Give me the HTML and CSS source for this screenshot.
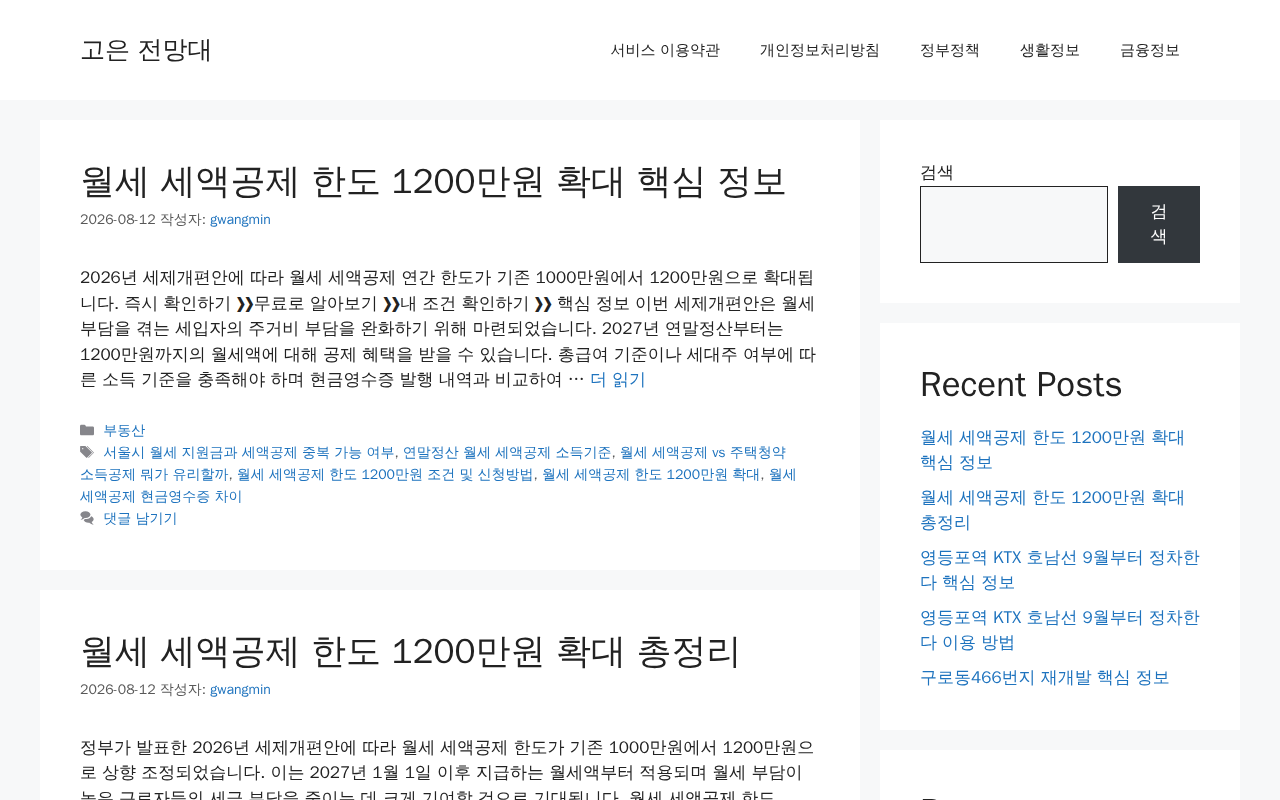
FILE: index.html
```html
<!DOCTYPE html>
<html lang="ko">
<head>
	<meta charset="utf-8">
	<meta name="viewport" content="width=device-width, initial-scale=1">
	<title>고은 전망대</title>
	<link rel="stylesheet" href="styles.css">
</head>
<body>
	<header class="site-header">
		<div class="inside-header">
			<p class="site-title"><a href="#">고은 전망대</a></p>
			<nav class="main-nav">
				<ul>
					<li><a href="#">서비스 이용약관</a></li>
					<li><a href="#">개인정보처리방침</a></li>
					<li><a href="#">정부정책</a></li>
					<li><a href="#">생활정보</a></li>
					<li><a href="#">금융정보</a></li>
				</ul>
			</nav>
		</div>
	</header>

	<div class="site-content">
		<main class="content-area">
			<article class="post">
				<h2 class="entry-title"><a href="#">월세 세액공제 한도 1200만원 확대 핵심 정보</a></h2>
				<div class="entry-meta"><time datetime="2026-08-12">2026-08-12</time> 작성자: <a href="#">gwangmin</a></div>
				<div class="entry-summary">
					<p>2026년 세제개편안에 따라 월세 세액공제 연간 한도가 기존 1000만원에서 1200만원으로 확대됩니다. 즉시 확인하기 ❯❯무료로 알아보기 ❯❯내 조건 확인하기 ❯❯ 핵심 정보 이번 세제개편안은 월세 부담을 겪는 세입자의 주거비 부담을 완화하기 위해 마련되었습니다. 2027년 연말정산부터는 1200만원까지의 월세액에 대해 공제 혜택을 받을 수 있습니다. 총급여 기준이나 세대주 여부에 따른 소득 기준을 충족해야 하며 현금영수증 발행 내역과 비교하여 … <a href="#">더 읽기</a></p>
				</div>
				<footer class="entry-footer">
					<div>
						<svg class="icon" viewBox="0 0 512 512" aria-hidden="true"><path d="M0 112c0-26.51 21.49-48 48-48h110.014a48 48 0 0 1 43.592 27.907l12.349 26.791A16 16 0 0 0 228.486 128H464c26.51 0 48 21.49 48 48v224c0 26.51-21.49 48-48 48H48c-26.51 0-48-21.49-48-48V112z"/></svg>
						<a href="#">부동산</a>
					</div>
					<div>
						<svg class="icon" viewBox="0 0 512 512" aria-hidden="true"><path fill-rule="evenodd" d="M20 39.5c-8.836 0-16 7.163-16 16v176c0 4.243 1.686 8.313 4.687 11.314l224 224c6.248 6.248 16.378 6.248 22.626 0l176-176c6.244-6.244 6.25-16.364.013-22.615l-223.5-224A15.999 15.999 0 0 0 196.5 39.5H20zm56 96c0-13.255 10.745-24 24-24s24 10.745 24 24-10.745 24-24 24-24-10.745-24-24z"/><path d="M259.515 43.015c4.686-4.687 12.284-4.687 16.97 0l228 228c4.686 4.686 4.686 12.284 0 16.97l-180 180c-4.686 4.687-12.284 4.687-16.97 0-4.686-4.686-4.686-12.284 0-16.97L479.029 279.5 259.515 59.985c-4.686-4.686-4.686-12.284 0-16.97z"/></svg>
						<a href="#">서울시 월세 지원금과 세액공제 중복 가능 여부</a>, <a href="#">연말정산 월세 세액공제 소득기준</a>, <a href="#">월세 세액공제 vs 주택청약 소득공제 뭐가 유리할까</a>, <a href="#">월세 세액공제 한도 1200만원 조건 및 신청방법</a>, <a href="#">월세 세액공제 한도 1200만원 확대</a>, <a href="#">월세 세액공제 현금영수증 차이</a>
					</div>
					<div>
						<svg class="icon" viewBox="0 0 512 512" aria-hidden="true"><path d="M132.838 329.973a435.298 435.298 0 0 0 16.769-9.004c13.363-7.574 26.587-16.142 37.419-25.507 7.544.597 15.27.925 23.098.925 54.905 0 105.634-15.311 143.285-41.28 23.728-16.365 43.115-37.692 54.155-62.645 54.739 22.205 91.498 63.272 91.498 110.286 0 42.186-29.558 79.498-75.09 102.828 23.46 49.216 75.09 101.709 75.09 101.709s-115.837-38.35-154.424-78.46c-9.956 1.12-20.297 1.758-30.793 1.758-88.727 0-162.927-43.071-181.007-100.61z"/><path d="M383.371 132.502c0 70.603-82.961 127.787-185.216 127.787-10.496 0-20.837-.639-30.793-1.757-38.587 40.093-154.424 78.429-154.424 78.429s51.63-52.472 75.09-101.67c-45.532-23.321-75.09-60.619-75.09-102.79C12.938 61.9 95.9 4.716 198.155 4.716c102.255 0 185.216 57.183 185.216 127.786z"/></svg>
						<a href="#">댓글 남기기</a>
					</div>
				</footer>
			</article>

			<article class="post">
				<h2 class="entry-title"><a href="#">월세 세액공제 한도 1200만원 확대 총정리</a></h2>
				<div class="entry-meta"><time datetime="2026-08-12">2026-08-12</time> 작성자: <a href="#">gwangmin</a></div>
				<div class="entry-summary">
					<p>정부가 발표한 2026년 세제개편안에 따라 월세 세액공제 한도가 기존 1000만원에서 1200만원으로 상향 조정되었습니다. 이는 2027년 1월 1일 이후 지급하는 월세액부터 적용되며 월세 부담이 높은 근로자들의 세금 부담을 줄이는 데 크게 기여할 것으로 기대됩니다. 월세 세액공제 한도</p>
				</div>
			</article>
		</main>

		<aside class="sidebar">
			<section class="widget">
				<form class="search-form" role="search">
					<label for="search">검색</label>
					<div class="search-row">
						<input type="search" id="search" name="s">
						<button type="submit">검색</button>
					</div>
				</form>
			</section>
			<section class="widget">
				<h2>Recent Posts</h2>
				<ul>
					<li><a href="#">월세 세액공제 한도 1200만원 확대 핵심 정보</a></li>
					<li><a href="#">월세 세액공제 한도 1200만원 확대 총정리</a></li>
					<li><a href="#">영등포역 KTX 호남선 9월부터 정차한다 핵심 정보</a></li>
					<li><a href="#">영등포역 KTX 호남선 9월부터 정차한다 이용 방법</a></li>
					<li><a href="#">구로동466번지 재개발 핵심 정보</a></li>
				</ul>
			</section>
			<section class="widget">
				<h2>Recent Comments</h2>
			</section>
		</aside>
	</div>
</body>
</html>
```
FILE: styles.css
```css
*, *::before, *::after {
	box-sizing: border-box;
}
body, h2, p, ul {
	margin: 0;
	padding: 0;
}
body {
	background-color: #f7f8f9;
	color: #222222;
	font-family: "WenQuanYi Zen Hei", FreeSans, "Liberation Sans", "Noto Sans CJK KR", sans-serif;
	font-size: 17px;
	line-height: 1.5;
}
ul {
	list-style: none;
}
a {
	color: #1e73be;
	text-decoration: none;
}
h2 {
	font-size: 35px;
	font-weight: 400;
	line-height: 1.2;
}

/* header */
.site-header {
	background-color: #ffffff;
}
.inside-header {
	display: flex;
	align-items: center;
	justify-content: space-between;
	max-width: 1200px;
	margin: 0 auto;
	padding: 20px 40px;
}
.site-title {
	font-size: 25px;
	line-height: 1.2;
}
.site-title a, .main-nav a, .entry-title a {
	color: #222222;
}
.main-nav ul {
	display: flex;
}
.main-nav a {
	display: block;
	padding: 0 20px;
	font-size: 15px;
	line-height: 60px;
}

/* layout */
.site-content {
	display: grid;
	grid-template-columns: 41fr 18fr;
	gap: 20px;
	max-width: 1200px;
	margin: 20px auto;
}
.content-area, .sidebar {
	display: flex;
	flex-direction: column;
	gap: 20px;
	min-width: 0;
}
.post, .widget {
	background-color: #ffffff;
	padding: 40px;
}

/* posts */
.entry-meta, .entry-footer {
	font-size: 14px;
	line-height: 22px;
	color: #595959;
}
.entry-meta {
	margin-top: 7px;
}
.entry-summary {
	margin-top: 34px;
}
.entry-footer {
	margin-top: 27px;
	word-break: keep-all;
}
.icon {
	width: 14px;
	height: 14px;
	margin-right: 5px;
	fill: #86868b;
	vertical-align: -2px;
}

/* sidebar */
.search-form label {
	display: block;
}
.search-row {
	display: flex;
	gap: 10px;
}
.search-row input {
	flex: 1;
	min-width: 0;
	padding: 8px;
	border: 1px solid #222222;
	border-radius: 0;
	background-color: #f7f8f9;
	font: inherit;
}
.search-row button {
	width: 82px;
	padding: 13px 32px;
	border: 0;
	background-color: #32373c;
	color: #ffffff;
	font: inherit;
}
.widget h2 {
	margin-bottom: 20px;
}
.widget li + li {
	margin-top: 9px;
}

@media (max-width: 768px) {
	.site-content {
		grid-template-columns: 1fr;
	}
	.inside-header, .main-nav ul {
		flex-wrap: wrap;
	}
}
```
